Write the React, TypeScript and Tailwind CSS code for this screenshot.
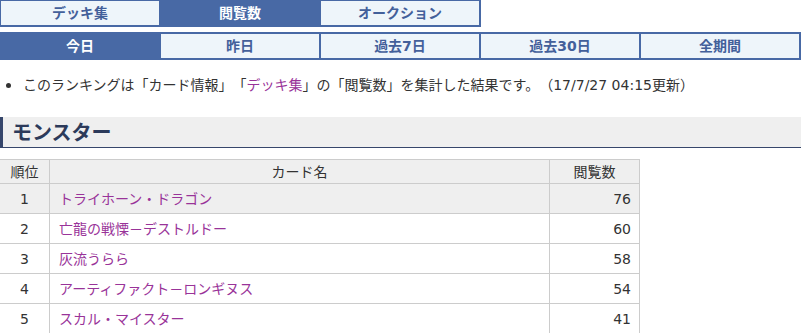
import React from "react";

const font = { fontFamily: '"DejaVu Sans", "Noto Sans CJK JP", sans-serif' };
const cjk = { fontFamily: '"Noto Sans CJK JP", sans-serif' };

const topTabs = [
  { label: "デッキ集", active: false },
  { label: "閲覧数", active: true },
  { label: "オークション", active: false },
];
const periodTabs = [
  { label: "今日", active: true },
  { label: "昨日", active: false },
  { label: "過去7日", active: false },
  { label: "過去30日", active: false },
  { label: "全期間", active: false },
];
const rows = [
  { rank: 1, name: "トライホーン・ドラゴン", count: 76 },
  { rank: 2, name: "亡龍の戦慄－デストルドー", count: 60 },
  { rank: 3, name: "灰流うらら", count: 58 },
  { rank: 4, name: "アーティファクト－ロンギヌス", count: 54 },
  { rank: 5, name: "スカル・マイスター", count: 41 },
];

function Tab({ label, active }: { label: string; active: boolean }) {
  return (
    <div
      className={
        "h-[24px] flex items-center justify-center text-[14px] font-bold leading-none " +
        (active ? "bg-[#4869a5] text-white" : "bg-[#eef5fa] text-[#43609a]")
      }
    >
      {label}
    </div>
  );
}

export default function App() {
  return (
    <div
      className="w-[810px] h-[333px] bg-white overflow-hidden text-[#333] [text-spacing-trim:space-all]"
      style={font}
    >
      <div className="-mt-px -ml-px">
        <div className="w-[482px] grid grid-cols-3 gap-[2px] p-[2px] bg-[#4869a5]">
          {topTabs.map((t) => (
            <Tab key={t.label} {...t} />
          ))}
        </div>
        <div className="mt-[5px] w-[802px] grid grid-cols-5 gap-[2px] p-[2px] bg-[#4869a5]">
          {periodTabs.map((t) => (
            <Tab key={t.label} {...t} />
          ))}
        </div>
      </div>

      <div className="mt-[15px] flex items-center h-[20px] text-[14px] leading-[20px]">
        <span className="ml-[6px] w-[5px] h-[5px] rounded-full bg-[#333]"></span>
        <span className="ml-[12px] whitespace-nowrap">
          このランキングは「カード情報」「<span className="text-[#993399]">デッキ集</span>」の「閲覧数」を集計した結果です。（17/7/27 04:15更新）
        </span>
      </div>

      <div className="mt-[22px] h-[31px] w-[801px] bg-[#efefef] border-l-[3px] border-b border-[#36466b] flex items-center pl-[9px]">
        <span className="text-[20px] font-bold text-[#2c3a5a] leading-none" style={cjk}>モンスター</span>
      </div>

      <table className="mt-[11px] -ml-px w-[641px] border-collapse text-[14px] leading-none">
        <thead>
          <tr className="bg-[#efefef] h-[24px]">
            <th className="w-[50px] border border-[#cccccc] font-normal">順位</th>
            <th className="w-[500px] border border-[#cccccc] font-normal">カード名</th>
            <th className="w-[90px] border border-[#cccccc] font-normal">閲覧数</th>
          </tr>
        </thead>
        <tbody>
          {rows.map((r, i) => (
            <tr key={r.rank} className={"h-[30px] " + (i === 0 ? "bg-[#efefef]" : "bg-white")}>
              <td className="border border-[#cccccc] text-center">{r.rank}</td>
              <td className="border border-[#cccccc] pl-[9px] text-[#993399]">{r.name}</td>
              <td className="border border-[#cccccc] text-right pr-[8px]">{r.count}</td>
            </tr>
          ))}
        </tbody>
      </table>
    </div>
  );
}
